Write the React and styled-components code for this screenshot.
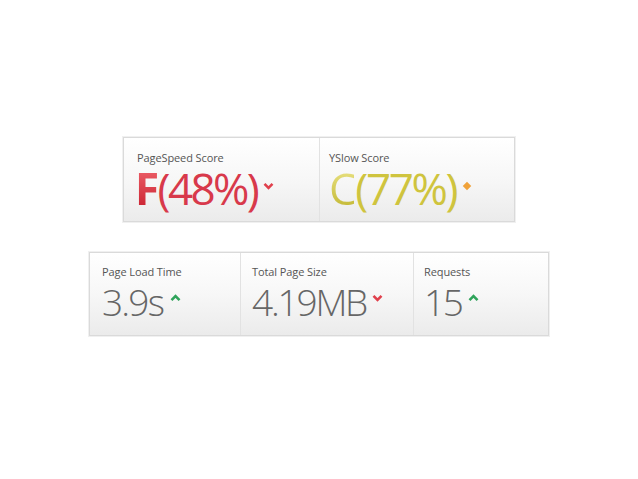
import React from "react";
import styled, { createGlobalStyle } from "styled-components";

const GlobalStyle = createGlobalStyle`
  html, body {
    margin: 0;
    padding: 0;
    background: #fff;
    font-family: "Open Sans", "DejaVu Sans", sans-serif;
  }
`;

const Page = styled.div`
  width: 638px;
  height: 479px;
  display: flex;
  flex-direction: column;
  align-items: center;
  padding-top: 137px;
  gap: 30px;
  box-sizing: border-box;
`;

const Panel = styled.div`
  display: flex;
  border: 1px solid #dadada;
  box-shadow: 0 0 0 1px #f0f0f0;
`;

const Cell = styled.div`
  width: ${(p) => p.$w}px;
  height: ${(p) => p.$h}px;
  box-sizing: border-box;
  padding: ${(p) => p.$pad};
  background: linear-gradient(to bottom, #ffffff 0%, #f7f7f7 50%, #ebebeb 100%);
  border-left: ${(p) => (p.$first ? "none" : "1px solid #e2e2e2")};
  display: flex;
  flex-direction: column;
`;

const Label = styled.div`
  font-size: 11px;
  color: #555;
  line-height: 14px;
  letter-spacing: -0.1px;
`;

const Value = styled.div`
  display: flex;
  align-items: center;
  font-weight: ${(p) => p.$weight};
  font-size: ${(p) => p.$size}px;
  line-height: 1;
  color: ${(p) => p.$color};
  margin-top: ${(p) => p.$mt}px;
  margin-left: ${(p) => p.$ml || 0}px;
  letter-spacing: ${(p) => p.$ls}px;
`;

const Grade = styled.span`
  font-weight: ${(p) => p.$weight};
  background: ${(p) => p.$grad};
  -webkit-background-clip: text;
  background-clip: text;
  color: transparent;
  margin-right: 1px;
`;

const Marker = styled.svg`
  margin-left: ${(p) => p.$ml}px;
  margin-top: ${(p) => p.$mt}px;
  flex: none;
`;

const Down = ({ ml = 6, mt = -5 }) => (
  <Marker $ml={ml} $mt={mt} width="11" height="8" viewBox="0 0 11 8">
    <polyline points="1.5,1.8 5.5,5.8 9.5,1.8" fill="none" stroke="#e0404c" strokeWidth="2.6" />
  </Marker>
);

const Up = ({ ml = 7, mt = -7 }) => (
  <Marker $ml={ml} $mt={mt} width="11" height="8" viewBox="0 0 11 8">
    <polyline points="1.5,6.2 5.5,2.2 9.5,6.2" fill="none" stroke="#2fa35a" strokeWidth="2.6" />
  </Marker>
);

const Diamond = () => (
  <Marker $ml={6} $mt={-4} width="10" height="10" viewBox="0 0 10 10">
    <rect x="2" y="2" width="6" height="6" fill="#f0a23a" transform="rotate(45 5 5)" />
  </Marker>
);

export default function App() {
  return (
    <>
      <GlobalStyle />
      <Page>
        <Panel>
          <Cell $first $w={195} $h={83} $pad="13px 0 0 13px">
            <Label>PageSpeed Score</Label>
            <Value $size={44} $weight={400} $ls={-2.6} $color="#d8394b" $mt={1} $ml={-2}>
              <Grade $weight={700} $grad="linear-gradient(to bottom, #ee626b, #c9202f)">F</Grade>
              (48%)
              <Down />
            </Value>
          </Cell>
          <Cell $w={195} $h={83} $pad="13px 0 0 9px">
            <Label>YSlow Score</Label>
            <Value $size={44} $weight={400} $ls={-2.4} $color="#cfc43e" $mt={1}>
              <Grade $weight={400} $grad="linear-gradient(to bottom, #ebe487, #c2b732)">C</Grade>
              (77%)
              <Diamond />
            </Value>
          </Cell>
        </Panel>
        <Panel>
          <Cell $first $w={150} $h={82} $pad="12px 0 0 12px">
            <Label>Page Load Time</Label>
            <Value $size={37} $weight={300} $ls={-1.8} $color="#666" $mt={4}>
              3.9s
              <Up />
            </Value>
          </Cell>
          <Cell $w={173} $h={82} $pad="12px 0 0 11px">
            <Label>Total Page Size</Label>
            <Value $size={37} $weight={300} $ls={-2.2} $color="#666" $mt={4}>
              4.19MB
              <Down mt={-7} />
            </Value>
          </Cell>
          <Cell $w={135} $h={82} $pad="12px 0 0 10px">
            <Label>Requests</Label>
            <Value $size={37} $weight={300} $ls={-2.4} $color="#666" $mt={4}>
              15
              <Up />
            </Value>
          </Cell>
        </Panel>
      </Page>
    </>
  );
}
